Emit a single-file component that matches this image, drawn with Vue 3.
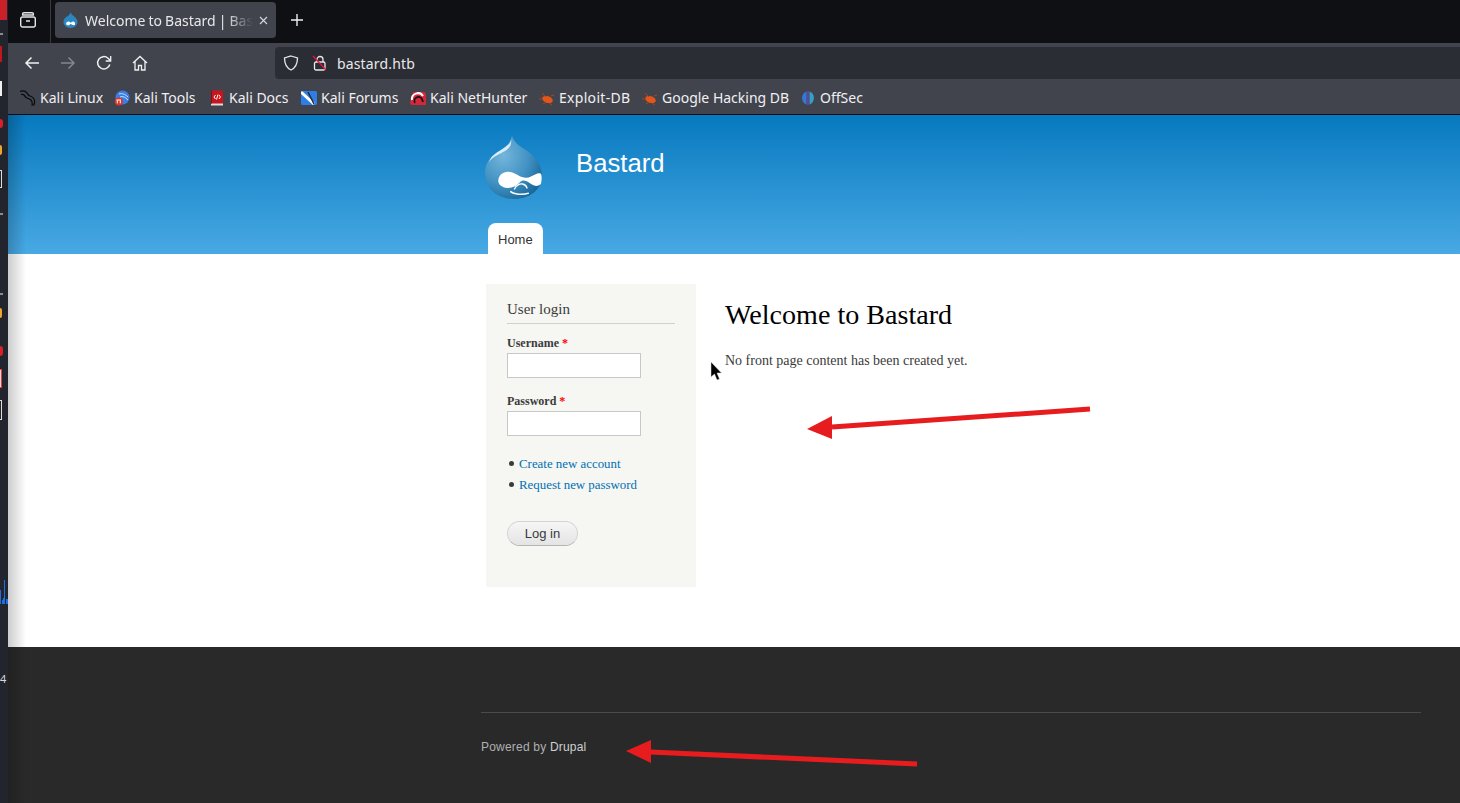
<script setup>
const bookmarks = [
  { label: 'Kali Linux', icon: 'kali', width: 94, spacing: 0 },
  { label: 'Kali Tools', icon: 'tools', width: 95, spacing: 0 },
  { label: 'Kali Docs', icon: 'docs', width: 92, spacing: 0 },
  { label: 'Kali Forums', icon: 'forums', width: 109, spacing: 0 },
  { label: 'Kali NetHunter', icon: 'nethunter', width: 129, spacing: 0 },
  { label: 'Exploit-DB', icon: 'bug', width: 103, spacing: 0.3 },
  { label: 'Google Hacking DB', icon: 'bug', width: 158, spacing: 0 },
  { label: 'OffSec', icon: 'offsec', width: 70, spacing: 0 }
]
</script>

<template>
  <div class="screen">
    <aside class="dock">
      <i class="d d1"></i><i class="d d2"></i><i class="d d3"></i><i class="d d4"></i><i class="d d5"></i>
      <i class="d d6"></i><i class="d d7"></i><i class="d d8"></i><i class="d d9"></i><i class="d d10"></i>
      <i class="d tick t-a"></i><i class="d tick t-b"></i><i class="d tick t-c"></i>
      <svg class="d graph" width="8" height="24" viewBox="0 0 8 24"><path d="M0 10h1v14H0zM2 20h1v4H2zM3 18h1v6H3zM4 0h1v24H4zM6 19h2v5H6z" fill="#1f6fe0"/></svg>
      <span class="d num">4</span>
    </aside>
    <div class="window">
      <div class="tabbar">
        <svg class="ic all" width="18" height="18" viewBox="0 0 18 18" fill="none" stroke="#e4e4e8" stroke-width="1.4"><rect x="1.7" y="6" width="14.6" height="10" rx="2"/><path d="M3.5 3.5v-.3a1.500 1.500 0 0 1 1.500-1.500h8a1.500 1.500 0 0 1 1.500 1.500v.3M3 4h12M7 10h4"/></svg>
        <div class="sep"></div>
        <div class="tab">
          <svg class="fav" width="15" height="16" viewBox="0 0 60 66">
            <path d="M31 1c1 8 9 13 16 19 7 6 12 14 12 22A29 24 0 0 1 1 42c0-9 5-17 13-22C22 15 29 9 31 1z" fill="#2a87bf"/>
            <path d="M12 48c0-6 5-9 10-9s7 5 9 5 5-5 10-5 8 4 8 9-4 7-8 6-7-5-10-5-6 6-10 6-9-2-9-7z" fill="#fff"/>
          </svg>
          <span class="tab-title">Welcome to Bastard | Bas</span>
          <svg class="close" width="9" height="9" viewBox="0 0 9 9" stroke="#d8d8dc" stroke-width="1.1"><path d="M1 1l7 7M8 1l-7 7"/></svg>
        </div>
        <svg class="plus" width="14" height="14" viewBox="0 0 14 14" stroke="#f0f0f2" stroke-width="1.4"><path d="M7 1v12M1 7h12"/></svg>
      </div>
      <div class="toolbar">
        <svg class="tool t1" width="16" height="16" viewBox="0 0 16 16" fill="none" stroke="#f0f0f2" stroke-width="1.5"><path d="M15 8H2M7.500 2.500L2 8l5.500 5.500"/></svg>
        <svg class="tool t2" width="16" height="16" viewBox="0 0 16 16" fill="none" stroke="#85868c" stroke-width="1.5"><path d="M1 8h13M8.500 2.500L14 8l-5.500 5.500"/></svg>
        <svg class="tool t3" width="16" height="16" viewBox="0 0 16 16" fill="none" stroke="#f0f0f2" stroke-width="1.5"><path d="M13.800 9.500A6.200 6.200 0 1 1 12 3.200L14.500 5.500"/><path d="M14.700 1v5h-5" stroke-width="1.300"/></svg>
        <svg class="tool t4" width="16" height="16" viewBox="0 0 16 16" fill="none" stroke="#f0f0f2" stroke-width="1.300"><path d="M1 8l7-6.500L15 8M3 6.500V15h3.500v-4.500h3V15H13V6.500"/></svg>
        <div class="urlbar">
          <svg width="16" height="16" viewBox="0 0 16 16" fill="none" stroke="#e8e8ea" stroke-width="1.300"><path d="M8 1l6.500 2c0 6-1.500 9.500-6.500 12C3 12.500 1.500 9 1.500 3z"/></svg>
          <svg class="lock" width="16" height="16" viewBox="0 0 16 16" fill="none" stroke="#e8e8ea" stroke-width="1.300"><rect x="2.500" y="7" width="10.500" height="8" rx="1.500"/><path d="M5 7V4.500a3 3 0 0 1 6 0V7"/><path d="M1 1l13 14" stroke="#e0143c"/></svg>
          <span class="url">bastard.htb</span>
        </div>
      </div>
      <div class="bookmarks">
        <div v-for="b in bookmarks" :key="b.label" class="bm" :style="{ width: b.width + 'px', letterSpacing: b.spacing + 'px' }">
          <svg width="16" height="16" viewBox="0 0 16 16">
            <g v-if="b.icon === 'kali'" fill="none" stroke="#08090c" stroke-width="1.200"><path d="M0 1.500c2-1 4-1 6 .5 2 1.500 2 3.500 4 4 2 .5 4 2 4.500 5 .2 1.500 0 3.500-1 4.500"/><path d="M12 16c.5-2 .5-4-1-6-1.500-1.500-4-1.500-5.500-3L4 5"/><path d="M1 4.500C2.500 4 4 4.500 5 6"/></g>
            <g v-else-if="b.icon === 'tools'"><circle cx="8.500" cy="7.500" r="7" fill="#3b7de0"/><path d="M5 4c3-1 6 0 9 3M6 7c3-1 5 0 8 3" stroke="#cfe0fa" fill="none"/><circle cx="4.800" cy="11.500" r="4" fill="#d9362b"/><path d="M3.300 10.300v3M6.300 10.300v3M2.500 10h4.500" stroke="#fff"/></g>
            <g v-else-if="b.icon === 'docs'"><rect x="2" y="0.500" width="12" height="14" rx="1" fill="#c8141c"/><rect x="2" y="13.500" width="12" height="2" fill="#dcdcdc"/><path d="M2.500 .5v13" stroke="#8a0c12"/><path d="M6.500 5L5 7l1.500 2M10 5l1.500 2L10 9M9 4.500L7.500 9.500" stroke="#fff" fill="none"/></g>
            <g v-else-if="b.icon === 'forums'"><rect x="0" y="1" width="16" height="14" rx="1.500" fill="#2c7fe8"/><path d="M0 2l13 12" stroke="#fff" stroke-width="3"/><path d="M7 2l6 12" stroke="#2a2a2e" stroke-width="1.500"/></g>
            <g v-else-if="b.icon === 'nethunter'"><path d="M3 2h10a3 3 0 0 1 3 3v10H3a3 3 0 0 1-3-3z" fill="#d4283a"/><path d="M2 10a6 6 0 0 1 11-4" fill="none" stroke="#fff" stroke-width="2"/><path d="M5 13a4 4 0 0 1 7-4l1 3" fill="none" stroke="#15151a" stroke-width="1.800"/></g>
            <g v-else-if="b.icon === 'bug'"><ellipse cx="8.500" cy="9.500" rx="5.500" ry="3.300" transform="rotate(18 8.500 9.500)" fill="#e2551b"/><path d="M0 9h4M3 3l4 4M12 6l3-1M4 14l3-2M10 13l3 2" stroke="#a84416"/></g>
            <g v-else><path d="M6.500 1.500A7 7 0 0 0 6.500 14.500z" fill="#2e7ad6"/><path d="M9.500 1.500A7 7 0 0 1 9.500 14.500z" fill="#33a0c8"/><rect x="7.300" y="1" width="1.300" height="14" fill="#7c3fc8"/></g>
          </svg>
          <span>{{ b.label }}</span>
        </div>
      </div>
      <div class="page">
        <header class="site-header">
          <div class="wrap">
            <div class="brand">
              <svg class="logo" width="58" height="65" viewBox="0 0 58 65">
                <defs>
                  <radialGradient id="drop" cx="32%" cy="32%" r="78%">
                    <stop offset="0" stop-color="#74b6db"/>
                    <stop offset="0.600" stop-color="#3f90c2"/>
                    <stop offset="1" stop-color="#1a6698"/>
                  </radialGradient>
                </defs>
                <path d="M27 0c1 6 6 10 14 15 9 6 16 15 16 26 0 13-12 23-28 23S0 54 0 37c0-9 6-16 14-21C21 12 26 7 27 0z" fill="url(#drop)"/>
                <path d="M26 4c0 5-4 7-10 11C11 18 6 21 4 27c4-6 11-8 16-11 5-3 7-7 6-12z" fill="#dcecf6"/>
                <path d="M13.300 46C13.300 40 18 36.500 23.500 36.700 29 37 33 40.500 37 42 40 43 43 43 46 41.500 49 40 53 37.500 55.500 38.500 57 39.500 57 44 56 49 53 51.500 50 51.500 47 49.500 44 47.500 41 45 38 45.500 35 46 33 50 29.500 51.500 26 53 21 53.500 18 52 15 50.500 13.300 48.500 13.300 46z" fill="#fff"/>
                <path d="M29.500 54C31 50 35 48.500 37.500 49 40 49.500 41.500 51 42 53" fill="none" stroke="#fff" stroke-width="1.300" stroke-linecap="round"/>
                <path d="M25.700 56.700c3 2.500 12 3.500 17.600 1.600" fill="none" stroke="#fff" stroke-width="1.500" stroke-linecap="round"/>
              </svg>
              <div class="site-name">Bastard</div>
            </div>
            <nav class="menu"><span class="home">Home</span></nav>
          </div>
        </header>
        <main class="content">
          <div class="wrap columns">
            <section class="sidebar">
              <h2>User login</h2>
              <label>Username <em>*</em></label>
              <div class="input"></div>
              <label class="second">Password <em>*</em></label>
              <div class="input"></div>
              <ul>
                <li><a>Create new account</a></li>
                <li><a>Request new password</a></li>
              </ul>
              <button>Log in</button>
            </section>
            <section class="article">
              <h1>Welcome to Bastard</h1>
              <p>No front page content has been created yet.</p>
            </section>
          </div>
        </main>
        <footer class="site-footer">
          <div class="wrap">
            <div class="foot-rule"></div>
            <div class="foot-line">Powered by <span>Drupal</span></div>
          </div>
        </footer>
        <div class="shade"></div>
      </div>
    </div>
    <svg class="overlay" width="1460" height="803" viewBox="0 0 1460 803">
      <path d="M1090 409L832 427" stroke="#e71c1e" stroke-width="5" fill="none"/>
      <path d="M807 429L832 416V439z" fill="#e71c1e"/>
      <path d="M917 764L650 752" stroke="#e71c1e" stroke-width="5" fill="none"/>
      <path d="M626 751L651 740V763z" fill="#e71c1e"/>
      <path d="M711 362v15l3.500-3 2.500 6 2.500-1-2.500-6h4.500z" fill="#000" stroke="#ddd" stroke-width="0.500"/>
    </svg>
  </div>
</template>

<style>
html, body { margin: 0; padding: 0; overflow: hidden; }
</style>

<style scoped>
.screen { position: relative; display: flex; width: 1460px; height: 803px; overflow: hidden; font-family: "Noto Sans", sans-serif; background: #22252e; }
.dock { position: relative; flex: 0 0 8px; background: #22252e; }
.d { position: absolute; display: block; }
.d1 { left: 0; top: 0; width: 7px; height: 20px; background: #c9202a; }
.d2 { left: 0; top: 46px; width: 2px; height: 16px; background: #c01818; }
.d3 { left: 0; top: 81px; width: 2px; height: 15px; background: #f0f0f0; }
.d4 { left: 0; top: 119px; width: 3px; height: 9px; border-radius: 0 5px 5px 0; background: #d8202a; }
.d5 { left: 0; top: 145px; width: 2px; height: 10px; border-radius: 0 5px 5px 0; background: #eda52c; }
.d6 { left: 0; top: 170px; width: 2px; height: 18px; border: 1px solid #ddd; border-left: 0; box-sizing: border-box; }
.d7 { left: 0; top: 308px; width: 2px; height: 10px; border-radius: 0 5px 5px 0; background: #eda52c; }
.d8 { left: 0; top: 346px; width: 3px; height: 10px; border-radius: 0 5px 5px 0; background: #d8202a; }
.d9 { left: 0; top: 369px; width: 2px; height: 19px; border: 1px solid #e04040; border-left: 0; box-sizing: border-box; background: #f0dada; }
.d10 { left: 0; top: 400px; width: 2px; height: 20px; border: 1px solid #ddd; border-left: 0; box-sizing: border-box; }
.tick { left: 0; width: 3px; height: 2px; background: #8a8c90; }
.t-a { top: 33px; }
.t-b { top: 213px; }
.t-c { top: 293px; }
.graph { left: 0; top: 580px; }
.num { left: 0; top: 672px; font-size: 11px; line-height: 14px; color: #d8d8d8; }
.window { flex: 1; min-width: 0; display: flex; flex-direction: column; }
.tabbar { flex: 0 0 43px; box-sizing: border-box; padding-bottom: 3px; display: flex; align-items: center; background: #0f1014; }
.all { margin-left: 11px; }
.sep { align-self: stretch; width: 1px; margin: 0 4px -3px 13px; background: #3a3b40; }
.tab { display: flex; align-items: center; width: 221px; height: 36px; box-sizing: border-box; padding: 0 12px 0 8px; background: #42444d; border-radius: 4px; color: #e8e8ea; }
.fav { flex: none; }
.tab-title { flex: 1; margin-left: 7px; font-size: 14px; word-spacing: -0.6px; white-space: nowrap; -webkit-mask-image: linear-gradient(90deg, #000 84%, transparent); mask-image: linear-gradient(90deg, #000 84%, transparent); }
.close { flex: none; margin-left: 6px; }
.plus { margin-left: 14px; }
.toolbar { flex: 0 0 38px; box-sizing: border-box; padding-top: 2px; display: flex; align-items: center; background: #42444d; }
.tool { flex: none; }
.t1 { margin-left: 16px; }
.t2 { margin-left: 20px; }
.t3 { margin-left: 20px; }
.t4 { margin-left: 20px; }
.urlbar { flex: 1; height: 32px; margin-left: 127px; display: flex; align-items: center; padding-left: 8px; background: #2b2d35; border-radius: 4px 0 0 4px; color: #e8e8ea; }
.lock { margin-left: 13px; }
.url { margin-left: 9px; font-size: 14px; letter-spacing: 0.15px; }
.bookmarks { flex: 0 0 34px; box-sizing: border-box; display: flex; align-items: center; padding-left: 12px; background: #42444d; border-bottom: 1px solid #0c0c10; font-size: 14px; color: #f0f0f2; }
.bm { flex: none; display: flex; align-items: center; gap: 4px; white-space: nowrap; }
.page { position: relative; flex: 1; min-height: 0; display: flex; flex-direction: column; background: #fff; font-family: "Liberation Serif", serif; }
.wrap { width: 940px; margin-left: 473px; }
.site-header { flex: 0 0 139px; background: linear-gradient(#0779bf, #48a9e4); }
.brand { display: flex; height: 108px; padding-top: 20px; box-sizing: border-box; margin-left: 4px; }
.logo { flex: none; }
.site-name { margin-left: 33px; margin-top: 13px; font-family: "Liberation Sans", sans-serif; font-size: 25.7px; line-height: 30px; color: #fff; }
.menu { padding-left: 7px; display: flex; }
.home { display: block; height: 31px; box-sizing: border-box; padding: 0 10px; line-height: 33px; background: #fff; border-radius: 8px 8px 0 0; font-family: "Liberation Sans", sans-serif; font-size: 13px; color: #333; }
.content { flex: 0 0 393px; box-sizing: border-box; padding-top: 30px; }
.columns { display: flex; }
.sidebar { flex: 0 0 210px; height: 303px; margin-left: 5px; box-sizing: border-box; padding: 16px 21px 0; background: #f6f6f2; color: #3b3b3b; font-size: 12px; }
.sidebar h2 { margin: 0 0 12px; padding-bottom: 5px; border-bottom: 1px solid #d0d0cc; font-size: 15px; font-weight: 400; line-height: 18px; color: #3b3b3b; }
.sidebar label { display: block; font-weight: 700; line-height: 15px; margin-bottom: 2px; }
.sidebar label em { color: #f00; font-style: normal; }
.second { margin-top: 16px; }
.input { width: 134px; height: 25px; box-sizing: border-box; border: 1px solid #c8c8c8; background: #fff; }
.sidebar ul { margin: 18px 0 0; padding: 0; list-style: none; line-height: 21px; font-size: 12.88px; }
.sidebar li::before { content: ""; display: inline-block; width: 5px; height: 5px; margin: 0 5.5px 0 1.5px; border-radius: 50%; background: #3b3b3b; vertical-align: 2px; }
.sidebar a { color: #0071b3; }
button { display: block; margin-top: 25px; width: 71px; height: 25px; padding: 0; border: 1px solid #d4d4d4; border-bottom-color: #b4b4b4; border-radius: 13px; background: linear-gradient(#f6f6f6, #e4e4e4); font-family: "Liberation Sans", sans-serif; font-size: 13px; color: #3a3a3a; }
.article { margin-left: 29px; color: #3b3b3b; }
.article h1 { margin: 14px 0 0; font-size: 28.1px; font-weight: 400; line-height: 34px; color: #000; }
.article p { margin: 20px 0 0; font-size: 14px; line-height: 18px; }
.site-footer { flex: 1; background: #292929; }
.foot-rule { height: 65px; border-bottom: 1px solid #4b4b4b; }
.foot-line { padding-top: 27px; font-family: "Liberation Sans", sans-serif; font-size: 12px; line-height: 14px; letter-spacing: 0.2px; color: #b0b0b0; white-space: nowrap; }
.foot-line span { color: #d0d0d0; }
.shade { position: absolute; left: 0; top: 0; bottom: 0; width: 18px; pointer-events: none; background: linear-gradient(90deg, rgba(0, 0, 0, 0.2), transparent); }
.overlay { position: absolute; left: 0; top: 0; pointer-events: none; }
</style>
